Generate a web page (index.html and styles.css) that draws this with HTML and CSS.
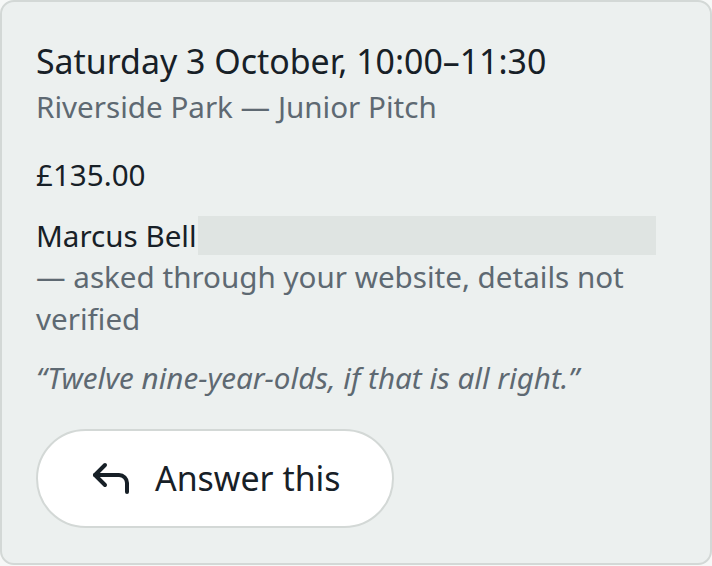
FILE: index.html
```html
<!DOCTYPE html>
<html lang="en">
<head>
  <meta charset="UTF-8">
  <meta name="viewport" content="width=device-width, initial-scale=1.0">
  <title>Booking request</title>
  <link rel="stylesheet" href="styles.css">
</head>
<body>
  <div class="request-card">
    <div class="slot">
      <div class="slot-time">Saturday 3 October, 10:00–11:30</div>
      <div class="slot-place">Riverside Park — Junior Pitch</div>
    </div>
    <div class="price">£135.00</div>
    <p class="requester">
      <span class="name">Marcus Bell</span><span class="name-pending"></span>
      <span class="source">— asked through your website, details not verified</span>
    </p>
    <p class="message">“Twelve nine-year-olds, if that is all right.”</p>
    <button class="answer-btn">
      <svg class="answer-icon" viewBox="0 0 24 24" width="48" height="48" fill="none" stroke="currentColor" stroke-width="2" stroke-linecap="round" stroke-linejoin="round">
        <polyline points="9 14 4 9 9 4"></polyline>
        <path d="M20 17.5v-4.5a4 4 0 0 0-4-4H4"></path>
      </svg>
      <span>Answer this</span>
    </button>
  </div>
</body>
</html>
```

FILE: styles.css
```css
body {
  margin: 0;
  padding: 0;
  background-color: #f6f8f7;
  color: #172027;
  font-family: "Noto Sans", "Open Sans", sans-serif;
}
.request-card {
  background-color: #ecf0ef;
  border: 2px solid #d3d8d6;
  border-radius: 14px;
  padding: 37px 34px 35px;
  font-size: 29.6px;
  line-height: 1.4;
}
.slot-time {
  font-size: 33.9px;
  line-height: 1.3;
}
.slot-place {
  color: #5e6972;
  margin-top: 3px;
}
.price {
  margin-top: 26px;
}
.requester {
  margin: 20px 0 0;
}
.name-pending {
  display: inline-block;
  width: 458px;
  height: 39px;
  margin-left: 1px;
  vertical-align: top;
  margin-top: 1px;
  background-color: #dfe4e2;
}
.source {
  color: #5e6972;
}
.message {
  margin: 18px 0 0;
  font-style: italic;
  color: #5e6972;
}
.answer-btn {
  display: flex;
  align-items: center;
  gap: 20px;
  margin-top: 30px;
  height: 99px;
  padding: 0 51px 0 49px;
  background-color: #ffffff;
  border: 2px solid #d3d8d6;
  border-radius: 50px;
  color: #172027;
  font-family: inherit;
  font-size: 33.9px;
  cursor: pointer;
}
.answer-icon {
  margin-top: 5px;
}
```
